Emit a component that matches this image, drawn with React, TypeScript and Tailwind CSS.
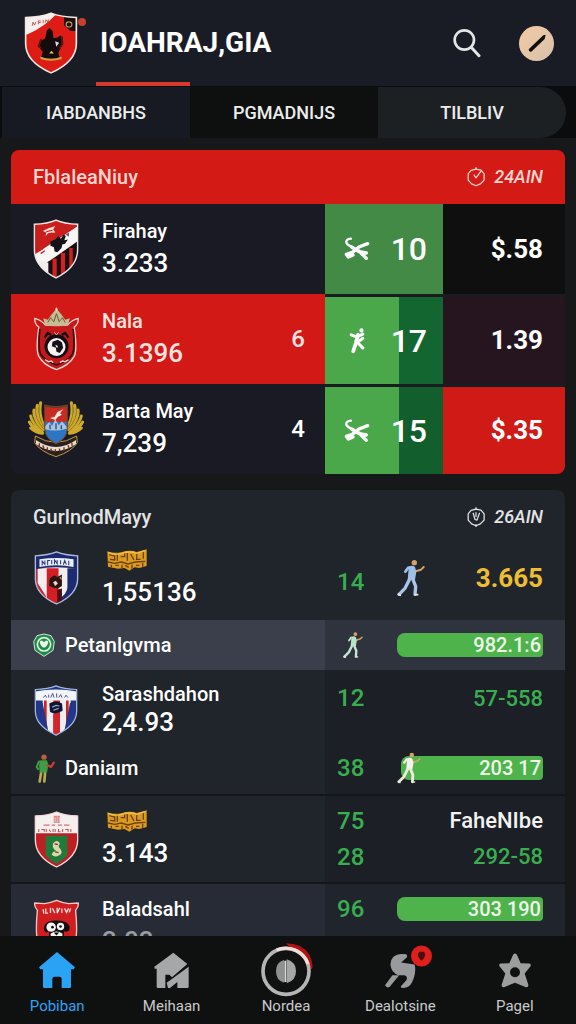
import { ReactNode, useId, useState } from "react";

const SHIELD = "M66 3C50 10 28 14 4 15v72c0 40 30 64 62 80 32-16 62-40 62-80V15C104 14 82 10 66 3Z";

type ShieldProps = {
  className: string;
  fill: string;
  edge: string;
  children: ReactNode;
};

function Shield({ className, fill, edge, children }: ShieldProps) {
  const id = useId();

  return (
    <svg viewBox="0 0 132 170" preserveAspectRatio="none" className={className} aria-hidden="true">
      <clipPath id={id}>
        <path d={SHIELD} />
      </clipPath>
      <g clipPath={`url(#${id})`}>
        <rect width="132" height="170" fill={fill} />
        {children}
      </g>
      <path d={SHIELD} fill="none" stroke={edge} strokeWidth="4" />
    </svg>
  );
}

function HeaderCrest() {
  return (
    <Shield className="h-[62px] w-[54px]" fill="#dd1c16" edge="#f3e9e6">
      <path d="M0 0h84Q52 40 8 62H0Z" fill="#f6f1ee" />
      <path d="M98 12h34v40h-18l-16-16Z" fill="#1a0d0c" />
      <path d="M20 38l2-10 4 8 3-9M35 34V24l6 1M36 29h5M47 31V22M52 29l2-8 4 6 2-7" stroke="#b33" strokeWidth="2" fill="none" />
      <circle cx="110" cy="34" r="7" fill="none" stroke="#b9985a" strokeWidth="3" />
      <path d="M56 50l6-6 8 8 2 20 10-2 8-6 4 14-4 20-6 14 4 16H40l6-18-8-12 2-18 12-8Z" fill="#140b0d" />
      <path d="M42 74l-6 20 6 4M92 66l2 22-8 12" stroke="#5c1410" strokeWidth="5" fill="none" />
      <path d="M76 80l10 4-7 11Z" fill="#d9dde6" />
      <path d="M40 122q26 12 52 0v7q-26 10-52 0Z" fill="#c9a53a" />
      <path d="M62 114l5-8 6 8Z" fill="#e6cf55" />
    </Shield>
  );
}

function StripedCrest() {
  return (
    <Shield className="h-[60px] w-[46px]" fill="#c81f1c" edge="#f0e8e8">
      <path d="M0 104L132 18v54L26 130Z" fill="#f8f6f5" />
      <path d="M26 134L132 60v110H26Z" fill="#170d12" />
      <path d="M0 110l44 14v50H0Z" fill="#f3eeee" />
      <path d="M56 112h12v60H56ZM80 96h12v60H80ZM104 82h10v60h-10Z" fill="#d3211d" />
      <path d="M28 34l16-8 20-6-6 10 6 8-18 2-10 8 2-10Z" fill="#f5d9d6" />
      <path d="M38 36l18-4M40 44l14-4" stroke="#c81f1c" strokeWidth="3" />
      <path d="M50 64l14-6 8-10 8 8 8-12 6 4-4 12 10-2-8 12-8 2-2 10-12 12-8-2-2-12-10-4Z" fill="#15131a" />
      <path d="M16 90l12-6M22 98l12-8" stroke="#c81f1c" strokeWidth="4" />
      <path d="M94 44l10-6-2 12Z" fill="#555" />
    </Shield>
  );
}

function CrownCrest() {
  return (
    <svg viewBox="0 0 140 192" className="h-16 w-[47px]" aria-hidden="true">
      <path d="M5 34q18 4 32 20h66q14-16 32-20 2 16-12 26 10 70 0 88-14 26-53 40-39-14-53-40-10-18 0-88Q3 50 5 34Z" fill="#c3191a" stroke="#efd9d3" strokeWidth="4" />
      <path d="M20 66q-6 56 2 76 14 20 48 32 34-12 48-32 8-20 2-76" fill="none" stroke="#3a0a0e" strokeWidth="5" />
      <path d="M36 54l-6-20 14 4 10-14 12-14 4-8 4 8 12 14 10 14 14-4-6 20q-34 8-68 0Z" fill="#c7bb94" />
      <path d="M44 46l8-14 10 12 8-24 8 24 10-12 8 14" stroke="#6d5836" strokeWidth="3" fill="none" />
      <path d="M66 6h8M70 2v10" stroke="#f1e6c4" strokeWidth="3" />
      <circle cx="70" cy="118" r="36" fill="#120d10" />
      <circle cx="70" cy="120" r="27" fill="#f5f2f0" />
      <path d="M58 104l16-6 12 8 4 16-10 16-10-4-2-12-12-4Z" fill="#151217" />
      <path d="M66 114l8 2-2 8Z" fill="#fff" />
      <path d="M34 92l10-14 10 6M106 92L96 78l-10 6" stroke="#120d10" strokeWidth="7" fill="none" />
      <path d="M64 76l6 8 6-8" stroke="#e4b0a8" strokeWidth="3" fill="none" />
      <path d="M36 158l10 6 8-2 6 5M80 167l8-5 8 2 10-6" stroke="#f1cfc9" strokeWidth="4" fill="none" />
    </svg>
  );
}

function WingedCrest() {
  return (
    <svg viewBox="0 0 168 174" className="h-[58px] w-14" aria-hidden="true">
      <g stroke="#cfa92c" strokeWidth="9" strokeLinecap="round" fill="none">
        <path d="M38 8q-8 40 14 78M28 16q-8 30 20 72M18 30q-4 24 26 58M8 48q4 22 34 44M4 66q10 20 38 30M8 84q14 14 36 16" />
        <path d="M130 8q8 40-14 78M140 16q8 30-20 72M150 30q4 24-26 58M160 48q-4 22-34 44M164 66q-10 20-38 30M160 84q-14 14-36 16" />
      </g>
      <g stroke="#6e6420" strokeWidth="2" fill="none">
        <path d="M34 14q-6 38 16 70M23 25q-4 30 24 62M12 42q2 24 32 50" />
        <path d="M134 14q6 38-16 70M145 25q4 30-24 62M156 42q-2 24-32 50" />
      </g>
      <path d="M22 108q62 38 124 0l2 20q-16 26-64 42-48-16-64-42Z" fill="#2a2020" stroke="#c49a3a" strokeWidth="3" />
      <path d="M50 18q34 8 68 0v68q0 28-34 46-34-18-34-46Z" fill="#c92a22" stroke="#5d4a27" strokeWidth="3" />
      <path d="M52 66h64v22q0 26-32 42-32-16-32-42Z" fill="#2c76c4" />
      <path d="M52 78l12-12 8 12 10-20 10 18 10-12 14 16v6q-34 10-64 2Z" fill="#a9c3de" />
      <path d="M66 74v14M84 70v18M100 76v12" stroke="#2a4a86" strokeWidth="4" />
      <path d="M66 54l14-4 8-14 18-8-10 12 6 4-12 6-8 10Z" fill="#fbe9e4" />
      <path d="M48 16q36 10 72 0" stroke="#6b3f25" strokeWidth="6" fill="none" />
      <path d="M24 120q60 42 120 0v12q-60 42-120 0Z" fill="#e6ddce" />
      <path d="M34 130v10M44 136l4 8M58 142v10M68 146l4 8M82 148v8M94 146l2 8M108 142v10M120 136l3 8M132 128v10" stroke="#7b3028" strokeWidth="4" />
    </svg>
  );
}

function BlueCrest() {
  return (
    <Shield className="h-[54px] w-[45px]" fill="#f3efef" edge="#aebbe0">
      <path d="M0 54h36v116H0Z" fill="#c9202a" />
      <path d="M10 54h26v90L10 100Z" fill="#f3efef" />
      <path d="M38 54h34v116H38Z" fill="#d31f24" />
      <path d="M98 54h34v116H70v-16q28-20 28-40Z" fill="#1d2c72" />
      <path d="M0 54h10v50l24 40v26H0Z" fill="#c9202a" />
      <path d="M0 0h132v58Q66 44 0 58Z" fill="#1b2a70" />
      <path d="M16 26q50-8 100 0v24q-50-10-100 0Z" fill="#e9edf6" />
      <path d="M24 46V32l8 10V30M40 44V30h7M52 42V28M60 42V28l8 12V28M78 42V29M86 43l4-13 5 13M102 45V31" stroke="#27397f" strokeWidth="3" fill="none" />
      <path d="M46 86l14-10 8 6 14-8v36l-12 8-12-2-14-6Z" fill="#2a1512" />
      <path d="M56 98l8-4 6 8-8 8Z" fill="#f0d4c4" />
      <path d="M74 84l6-4 2 12Z" fill="#c98b5f" />
      <path d="M68 122l14-4v44H68Z" fill="#4a0f12" />
    </Shield>
  );
}

function StripeBlueCrest() {
  return (
    <Shield className="h-[51px] w-11" fill="#f1edef" edge="#9fb3dc">
      <path d="M0 50h26v120H0ZM110 50h22v120h-22Z" fill="#22378a" />
      <path d="M30 50h8v110h-8ZM58 50h20v120H58ZM96 50h8v100h-8Z" fill="#cd2427" />
      <path d="M0 60h26l20 110H0ZM108 60h24v110H88Z" fill="#22378a" />
      <path d="M58 98h20v60l-10 10-10-10Z" fill="#d3262a" />
      <path d="M0 0h132v52H0Z" fill="#f4f5f9" />
      <path d="M0 0h132v22Q66 8 0 22Z" fill="#22378a" />
      <path d="M28 42l6-8 4 8M44 42V32M50 42l6-14 4 14M68 42V28M74 42l6-10 4 10M92 42l4-8 6 8" stroke="#445184" strokeWidth="3" fill="none" />
      <path d="M46 62q20-14 38 0l2 24q-20 14-38 4Z" fill="#101631" />
      <path d="M54 74l12-6 10 2M58 84l16-6" stroke="#8da7cf" strokeWidth="4" fill="none" />
    </Shield>
  );
}

function GreenCrest() {
  return (
    <Shield className="h-[57px] w-[45px]" fill="#bf1f22" edge="#f1dcdb">
      <path d="M0 0h132v66H0Z" fill="#f5f0ef" />
      <path d="M58 14h18v22H58Z" fill="#d9807c" />
      <path d="M62 18v16M68 16v20M74 18v16" stroke="#f5f0ef" strokeWidth="2" />
      <path d="M28 42h18M52 42h10M70 42h12M88 42h16" stroke="#d0716d" strokeWidth="4" />
      <path d="M14 54v9M22 55h8v7M36 54v9M44 55l5 7M56 54v9M62 54v9M72 54v8h6M84 54v9M92 55h8v7M108 54v9" stroke="#c24a46" strokeWidth="3" fill="none" />
      <path d="M34 74h64v58q-16 18-32 26-16-8-32-26Z" fill="#1f7a3c" />
      <path d="M56 96q14-14 20 2-8 8 2 16 8 12-4 18-14 8-22-2 2-10 14-10-14-8-10-24Z" fill="#d9d8a8" />
      <path d="M60 98l10 2M62 122l10 2" stroke="#9a3030" strokeWidth="4" />
    </Shield>
  );
}

function DogCrest() {
  return (
    <svg viewBox="0 0 140 170" className="h-[57px] w-[47px]" aria-hidden="true">
      <path d="M70 4q-20 8-36 10L5 12q-2 10 8 22-6 60 0 90 10 26 57 42 47-16 57-42 6-30 0-90 10-12 8-22l-29 2Q90 12 70 4Z" fill="#cf1d20" stroke="#efc9c6" strokeWidth="4" />
      <path d="M30 30l2 14M38 28v14h7M52 26v16M58 28l7 14M72 26v16l8-16M86 28v14M94 28l6 12 6-12M112 28l-4 12" stroke="#f2dad7" strokeWidth="4" fill="none" />
      <path d="M34 80q6-16 36-16t38 16q4 14-8 18l-8-2v44H48V96l-8 4q-12-6-6-20Z" fill="#120d10" />
      <circle cx="54" cy="84" r="14" fill="#f6f4f3" />
      <circle cx="82" cy="82" r="11" fill="#f6f4f3" />
      <circle cx="58" cy="84" r="4" fill="#120d10" />
      <circle cx="82" cy="82" r="4" fill="#120d10" />
      <path d="M52 104q18-14 36 0l-2 24H56Z" fill="#f6f4f3" />
      <path d="M62 100h16l-8 9Z" fill="#120d10" />
    </svg>
  );
}

function GoldBanner() {
  return (
    <svg viewBox="0 0 126 72" className="ml-1 h-6 w-[42px]" aria-label="Gold rank" role="img">
      <path d="M4 10q22 8 44 2 24-8 44 0l30-8v50l-22 6-14-2-16 10-14-8-20 2-30-6Z" fill="#dc9a20" />
      <path d="M10 20l16 4v12l-14-2M34 16v22M44 26h12V14M64 14v24M74 18l10 18M92 14v20h12M112 10v22M6 42l20 4 20-4 20 6 22-6 30-2" stroke="#6b4208" strokeWidth="4" fill="none" />
      <path d="M16 50v8M28 52h10M48 50v10M58 52l10 6M78 50v12M90 52h10M110 44v12" stroke="#6b4208" strokeWidth="4" fill="none" />
      <path d="M6 14q22 8 42 2 24-8 44 0l26-8" stroke="#f2bf45" strokeWidth="4" fill="none" />
    </svg>
  );
}

type RunnerProps = {
  className: string;
  shirt: string;
  legs: string;
  skin?: string;
};

function Runner({ className, shirt, legs, skin = "#d9a066" }: RunnerProps) {
  return (
    <svg viewBox="0 0 84 114" className={className} fill="none" strokeLinecap="round" strokeLinejoin="round" aria-hidden="true">
      <circle cx="52" cy="11" r="8" fill={skin} />
      <path d="M58 36l14-4 8-8" stroke={skin} strokeWidth="6" />
      <path d="M34 26l-9 12" stroke={shirt} strokeWidth="8" />
      <path d="M36 22q12-4 18 2l4 14-4 24H32l2-22Z" fill={shirt} />
      <path d="M37 62L24 88 6 106" stroke={legs} strokeWidth="10" />
      <path d="M48 62l8 20-2 24" stroke={legs} strokeWidth="10" />
      <path d="M54 107h8M4 106l6 3" stroke="#e8e4e0" strokeWidth="5" />
    </svg>
  );
}

function StandingPlayer() {
  return (
    <svg viewBox="0 0 60 86" className="h-[29px] w-5" fill="none" strokeLinecap="round" aria-hidden="true">
      <circle cx="27" cy="9" r="8" fill="#b9603f" />
      <path d="M16 18h20l4 14-4 24H14l-2-22Z" fill="#3f9d45" />
      <path d="M12 22L5 38l4 6" stroke="#3f9d45" strokeWidth="6" />
      <path d="M38 34l10 4 8-12" stroke="#c93a35" strokeWidth="7" />
      <path d="M18 58l-4 24M30 58l-2 24" stroke="#b8ab55" strokeWidth="8" />
    </svg>
  );
}

function CrossedMark() {
  return (
    <svg viewBox="0 0 76 72" className="h-6 w-[26px]" fill="none" stroke="#fff" strokeLinecap="round" strokeLinejoin="round" aria-hidden="true">
      <path d="M20 5Q4 6 6 17q4 8 18 14" strokeWidth="7" />
      <path d="M22 30l22 14 22 4M44 42l22 22" strokeWidth="10" />
      <path d="M70 20L44 30 24 46 6 52l6 8 14-6" strokeWidth="10" />
    </svg>
  );
}

function FigureMark() {
  return (
    <svg viewBox="0 0 50 76" className="h-[26px] w-[18px]" fill="none" stroke="#fff" strokeLinecap="round" strokeLinejoin="round" aria-hidden="true">
      <circle cx="38" cy="7" r="6" fill="#fff" stroke="none" />
      <path d="M8 20l16 6 18-8" strokeWidth="9" />
      <path d="M28 20l-6 24-8 24" strokeWidth="11" />
      <path d="M22 38l20 20M42 30L26 42" strokeWidth="9" />
    </svg>
  );
}

function ClockIcon({ variant }: { variant: "check" | "arrow" }) {
  return (
    <svg viewBox="0 0 60 64" className="size-5" fill="none" stroke="currentColor" strokeWidth="4" strokeLinecap="round" strokeLinejoin="round" aria-hidden="true">
      <path d="M30 7L46 10 56 22V42L44 54 30 60 16 54 5 42V22L14 11Z" />
      {variant === "check" ? (
        <path d="M24 26l6 9L46 13M30 2v5" />
      ) : (
        <path d="M21 20l6 20 6 2 8-22M30 18v12M30 2v6M30 56v6" />
      )}
    </svg>
  );
}

type CardHeaderProps = {
  title: string;
  time: string;
  variant: "check" | "arrow";
  className: string;
};

function CardHeader({ title, time, variant, className }: CardHeaderProps) {
  return (
    <div className={`flex h-[54px] items-center justify-between px-[22px] font-medium ${className}`}>
      <h2 className="text-xl">{title}</h2>
      <span className="flex items-center gap-2 text-lg italic">
        <ClockIcon variant={variant} />
        {time}
      </span>
    </div>
  );
}

type TeamProps = {
  crest: ReactNode;
  name: ReactNode;
  value: ReactNode;
  extra?: string;
  tight?: boolean;
};

function Team({ crest, name, value, extra, tight = false }: TeamProps) {
  return (
    <div className="flex items-center gap-4 pl-[15px] pr-5">
      <span className="flex w-[60px] shrink-0 justify-center">{crest}</span>
      <span className={`flex flex-1 flex-col ${tight ? "" : "gap-1"}`}>
        <span className="flex h-6 items-center text-xl font-medium">{name}</span>
        <span className="text-[26px] leading-8 font-medium">{value}</span>
      </span>
      {extra && <span className="text-2xl font-medium">{extra}</span>}
    </div>
  );
}

function Pill({ children }: { children: ReactNode }) {
  return (
    <span className="flex h-6 items-center justify-end rounded-l-lg rounded-r-sm bg-[#4eb34b] pr-0.5 text-xl font-medium text-[#eef8ea]">
      {children}
    </span>
  );
}

const PRICES = [
  {
    name: "Firahay",
    value: "3.233",
    extra: "",
    crest: <StripedCrest />,
    mark: <CrossedMark />,
    count: "10",
    price: "$.58",
    row: "",
    countCell: "bg-[#428a45]",
    priceCell: "bg-[#0f0f10]",
  },
  {
    name: "Nala",
    value: "3.1396",
    extra: "6",
    crest: <CrownCrest />,
    mark: <FigureMark />,
    count: "17",
    price: "1.39",
    row: "bg-[#d31915] text-[#fbe4e0]",
    countCell: "border-t-[3px] bg-linear-to-r from-[#4aa84b] from-63% to-[#13662f] to-63%",
    priceCell: "border-t-[3px] bg-[#26151f]",
  },
  {
    name: "Barta May",
    value: "7,239",
    extra: "4",
    crest: <WingedCrest />,
    mark: <CrossedMark />,
    count: "15",
    price: "$.35",
    row: "",
    countCell: "border-t-[3px] bg-linear-to-r from-[#4aa84b] from-63% to-[#125f2d] to-63%",
    priceCell: "border-t-[3px] bg-[#d01a16]",
  },
];

function PriceCard() {
  return (
    <section className="overflow-hidden rounded-lg bg-[#191a24]">
      <CardHeader title="FblaleaNiuy" time="24AIN" variant="check" className="bg-[#d31a15] text-[#fad5cf]" />
      <table className="w-full table-fixed border-separate border-spacing-0 text-left">
        <colgroup>
          <col />
          <col className="w-[118px]" />
          <col className="w-[122px]" />
        </colgroup>
        <tbody>
          {PRICES.map((item) => (
            <tr key={item.name} className="h-[90px]">
              <th scope="row" className={`p-0 font-normal ${item.row}`}>
                <Team crest={item.crest} name={item.name} value={item.value} extra={item.extra} />
              </th>
              <td className={`border-[#191c20] p-0 ${item.countCell}`}>
                <span className="flex items-center justify-between pl-[18px] pr-4 text-[32px] font-medium">
                  <span className="flex w-7 justify-center">{item.mark}</span>
                  {item.count}
                </span>
              </td>
              <td className={`border-[#191c20] py-0 pl-0 pr-[22px] text-right text-[26px] font-bold ${item.priceCell}`}>
                {item.price}
              </td>
            </tr>
          ))}
        </tbody>
      </table>
    </section>
  );
}

function ScoreCard() {
  const number = "py-0 pl-3 pr-0 text-2xl font-medium";
  const figure = "py-0 pl-0 pr-[22px] text-right text-[22px] font-medium";
  const side = "bg-[#1c1f25] text-[#39ae50]";
  const divider = "border-t-2 border-[#14161a]";

  return (
    <section className="overflow-hidden rounded-lg bg-[#20242b]">
      <CardHeader title="GurlnodMayy" time="26AIN" variant="arrow" className="text-[#e2e4e6]" />
      <table className="w-full table-fixed border-separate border-spacing-0 text-left">
        <colgroup>
          <col />
          <col className="w-[72px]" />
          <col className="w-[168px]" />
        </colgroup>
        <tbody>
          <tr className="h-[76px]">
            <th scope="row" className="px-0 pb-2 pt-0 font-normal">
              <Team crest={<BlueCrest />} name={<GoldBanner />} value="1,55136" />
            </th>
            <td className={`${number} text-[#39ae50]`}>14</td>
            <td className="px-0 pb-2 pt-0">
              <span className="flex items-center justify-between pr-[22px] text-[26px] font-bold text-[#edbe35]">
                <Runner className="h-[38px] w-7" shirt="#9fc0e6" legs="#a9c6ea" />
                3.665
              </span>
            </td>
          </tr>
          <tr className="h-[50px] bg-[#2e333e]">
            <th scope="row" className="bg-[#3a3f4b] py-0 pl-[22px] pr-0 font-medium">
              <span className="flex items-center gap-2.5 text-xl">
                <svg viewBox="0 0 66 72" className="h-6 w-[22px]" aria-hidden="true">
                  <path d="M33 3L54 8 64 26 60 52 33 70 6 52 2 26 12 8Z" fill="#1f8a45" stroke="#cfe8d4" strokeWidth="3" />
                  <circle cx="33" cy="34" r="20" fill="none" stroke="#dff0e0" strokeWidth="5" />
                  <path d="M20 26q6-8 13 2 7-10 13-2-2 14-13 18-11-4-13-18Z" fill="#e8f4e8" />
                </svg>
                Petanlgvma
              </span>
            </th>
            <td className="py-0 pl-[18px] pr-0">
              <Runner className="h-7 w-5" shirt="#b9e3c4" legs="#c3e6cc" />
            </td>
            <td className={figure}>
              <Pill>982.1:6</Pill>
            </td>
          </tr>
          <tr className="h-[72px]">
            <th scope="row" className="px-0 pb-0 pt-2 font-normal">
              <Team crest={<StripeBlueCrest />} name="Sarashdahon" value="2,4.93" tight />
            </th>
            <td className={`${number} ${side}`}>
              <span className="block pb-4">12</span>
            </td>
            <td className={`${figure} ${side}`}>
              <span className="block pb-4">57-558</span>
            </td>
          </tr>
          <tr className="h-[52px]">
            <th scope="row" className="py-0 pl-6 pr-0 font-medium">
              <span className="flex items-center gap-2.5 text-xl">
                <StandingPlayer />
                Daniaım
              </span>
            </th>
            <td className={`${number} ${side}`}>38</td>
            <td className={`${figure} ${side}`}>
              <span className="relative block pl-1">
                <Pill>203 17</Pill>
                <span className="absolute -top-1 left-0">
                  <Runner className="h-8 w-6" shirt="#f3f1ec" legs="#f1e9df" />
                </span>
              </span>
            </td>
          </tr>
          <tr className="h-[88px]">
            <th scope="row" className={`p-0 font-normal ${divider}`}>
              <Team crest={<GreenCrest />} name={<GoldBanner />} value="3.143" />
            </th>
            <td className={`${number} ${side} ${divider} leading-9`}>
              75
              <br />
              28
            </td>
            <td className={`${figure} ${side} ${divider} leading-9`}>
              <span className="block text-[#f1f2f2]">FaheNIbe</span>
              292-58
            </td>
          </tr>
          <tr className="h-[88px]">
            <th scope="row" className={`bg-[#272b35] p-0 font-normal ${divider}`}>
              <Team
                crest={<DogCrest />}
                name="Baladsahl"
                value={<span className="text-[#9a9ca2]">2.02</span>}
              />
            </th>
            <td className={`${number} ${divider} bg-[#20242c] leading-9 text-[#39ae50]`}>
              96
              <br />
              25
            </td>
            <td className={`${figure} ${divider} bg-[#20242c] pb-9`}>
              <Pill>303 190</Pill>
            </td>
          </tr>
        </tbody>
      </table>
    </section>
  );
}

const TABS = [
  { label: "IABDANBHS", className: "bg-[#171923]" },
  { label: "PGMADNIJS", className: "bg-[#0e0f0f]" },
  { label: "TILBLIV", className: "rounded-r-full bg-[#1c2022]" },
];

const NAV = [
  {
    label: "Pobiban",
    icon: (
      <svg viewBox="0 0 108 108" className="size-9" fill="currentColor">
        <path d="M54 0L108 46l-4 6h-8v52q0 4-4 4H68V80q0-6-6-6H46q-6 0-6 6v28H16q-4 0-4-4V52H4l-4-6Z" />
      </svg>
    ),
  },
  {
    label: "Meihaan",
    icon: (
      <svg viewBox="0 0 108 108" className="size-9" fill="currentColor">
        <path d="M58 2L100 36 54 76 46 68H34v40H12q-4 0-4-4V50H2L1 44Z" />
        <path d="M104 44v60q0 4-4 4H70V90l-22 18H42l-4-16Z" />
      </svg>
    ),
  },
  {
    label: "Nordea",
    icon: (
      <svg viewBox="0 0 168 168" className="h-14 w-14 shrink-0">
        <path d="M84 4q48 0 70 34 8 14 10 36-2 12-14 8Z" fill="#b3120f" />
        <circle cx="84" cy="88" r="69" fill="#101111" stroke="#b5b5b5" strokeWidth="11" />
        <path d="M56 24Q84 12 116 26q26 14 34 40" stroke="#f3dcd9" strokeWidth="10" fill="none" />
        <path d="M78 54q-24 6-24 34t24 34Z" fill="#8f9090" />
        <path d="M86 52q28 8 28 36t-28 36Z" fill="#a5a6a6" />
        <path d="M82 56v64" stroke="#d8d8d8" strokeWidth="6" />
      </svg>
    ),
  },
  {
    label: "Dealotsine",
    icon: (
      <span className="relative block">
        <svg viewBox="0 0 92 104" className="h-[35px] w-[31px]" fill="#999a9b">
          <path d="M64 4Q18-4 16 34q2 24 24 32h16q12 2 8 14l-16 18q-4 6 6 6 18 0 26-16 14-30 8-54L48 28 66 12Z" />
          <path d="M22 66h20L14 100q-8 6-14-4Z" />
        </svg>
        <svg viewBox="0 0 62 64" className="absolute -right-4 -top-2 h-[22px] w-[21px]">
          <circle cx="31" cy="32" r="31" fill="#df1f1b" />
          <path d="M31 46q-14-12-10-22 4-8 10-4 6-4 10 4 4 10-10 22Z" fill="#4c0c0c" />
        </svg>
      </span>
    ),
  },
  {
    label: "Pagel",
    icon: (
      <svg viewBox="0 0 96 102" className="h-[35px] w-8" fill="#9d9d9e">
        <path
          fillRule="evenodd"
          d="M48 0q5 0 7 7l10 22 26 1q7 2 3 9L77 60l11 34q1 8-7 7L48 88 15 101q-8 1-7-7l11-34L2 39q-4-7 3-9l26-1 10-22q2-7 7-7ZM48 41a15 15 0 1 0 0 30 15 15 0 0 0 0-30Z"
        />
      </svg>
    ),
  },
];

export default function App() {
  const [tab, setTab] = useState(0);

  return (
    <div className="flex h-dvh flex-col overflow-hidden bg-[#17181a] font-['Roboto',sans-serif] text-white">
      <header className="flex h-[86px] shrink-0 items-center bg-[#1a1c25] pl-6 pr-[22px]">
        <span className="relative mr-[22px]">
          <HeaderCrest />
          <span className="absolute -right-2 top-1.5 size-2 rounded-full bg-[#c5402d]" />
        </span>
        <h1 className="flex-1 text-[28px] font-bold">IOAHRAJ,GIA</h1>
        <button type="button" aria-label="Search" className="mr-[38px] text-[#e4e5e6]">
          <svg viewBox="0 0 84 88" className="h-[30px] w-7" fill="none" stroke="currentColor" strokeLinecap="round" aria-hidden="true">
            <circle cx="34" cy="35" r="29" strokeWidth="8" />
            <path d="M56 58l22 24" strokeWidth="9" />
          </svg>
        </button>
        <button
          type="button"
          aria-label="Profile"
          className="flex size-[35px] items-center justify-center rounded-full bg-linear-to-br from-[#f2c9a4] to-[#d8c2ac]"
        >
          <svg viewBox="0 0 54 54" className="size-[18px]" aria-hidden="true">
            <path d="M2 46L46 4l7-2-3 13L10 53q-8 2-8-7Z" fill="#120e0e" />
          </svg>
        </button>
      </header>

      <div role="tablist" className="flex h-[52px] shrink-0 bg-[#0b0c0d] pl-0.5 pr-2.5 pt-px">
        {TABS.map((item, index) => (
          <button
            key={item.label}
            type="button"
            role="tab"
            aria-selected={tab === index}
            onClick={() => setTab(index)}
            className={`relative flex-1 text-lg font-medium text-[#eceded] ${item.className}`}
          >
            {tab === index && <span className="absolute -top-[5px] right-0 h-1 w-1/2 bg-[#d8392d]" />}
            {item.label}
          </button>
        ))}
      </div>

      <main className="flex min-h-0 flex-1 flex-col gap-4 overflow-y-auto px-[11px] pt-3 [scrollbar-width:none] *:shrink-0">
        <PriceCard />
        <ScoreCard />
      </main>

      <nav className="flex h-[88px] shrink-0 bg-[#0f1010] pr-1">
        {NAV.map((item, index) => (
          <a
            key={item.label}
            href="#"
            className={`flex flex-1 flex-col items-center pt-1.5 ${index === 0 ? "text-[#2ba3f5]" : "text-[#a6a7a8]"}`}
          >
            <span className="flex h-14 items-center">{item.icon}</span>
            <span className={`text-[15px] leading-4 ${index === 0 ? "" : "text-[#c9cacb]"}`}>{item.label}</span>
          </a>
        ))}
      </nav>
    </div>
  );
}
